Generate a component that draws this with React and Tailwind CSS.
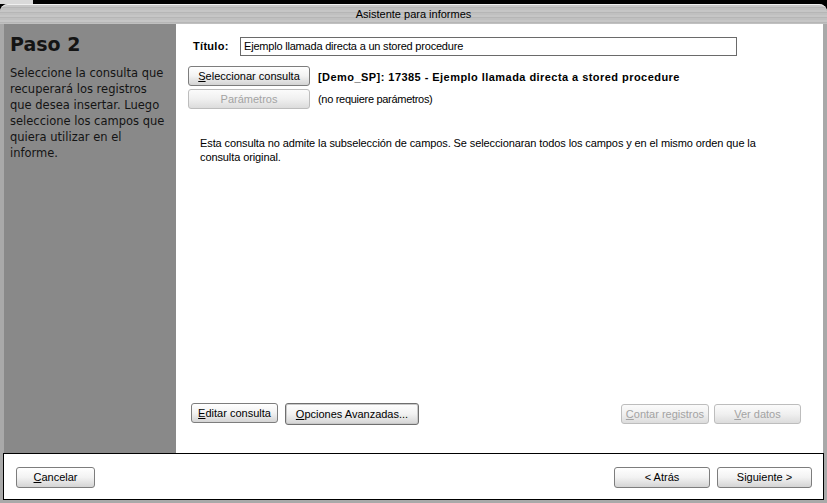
const ui = { fontFamily: '"Liberation Sans", Arial, sans-serif' };
const verdana = { fontFamily: '"DejaVu Sans", Verdana, sans-serif' };

function Btn({ children, w, disabled, focused, h = "h-[20px]" }) {
  const base = `flex ${h} items-center justify-center rounded-[3px] border text-[11px] leading-none`;
  const look = disabled
    ? "border-[#bdbdbd] bg-gradient-to-b from-[#fbfbfb] via-[#f0f0f0] to-[#dcdcdc] text-[#a3a3a3]"
    : focused
      ? "border-[#6f6f6f] bg-gradient-to-b from-white via-[#f2f2f2] to-[#d4d4d4] text-black shadow-[inset_0_0_0_1px_#c9c9c9]"
      : "border-[#7d7d7d] bg-gradient-to-b from-white via-[#f2f2f2] to-[#d4d4d4] text-black";
  return (
    <div className={`${base} ${look} ${w}`} style={ui}>
      {children}
    </div>
  );
}

export default function App() {
  return (
    <div className="relative h-[503px] w-[827px] overflow-hidden bg-black" style={ui}>
      {/* desktop strip above the window */}
      <div className="flex h-[4px]">
        <div className="h-full w-[33px] bg-[#d9d9d9]" />
      </div>

      {/* window */}
      <div className="flex h-[499px] flex-col rounded-t-[8px] bg-[#a9a9a9]">
        {/* title bar */}
        <div className="flex h-[20px] items-center justify-center rounded-t-[8px] border-t border-[#efefef] bg-[repeating-linear-gradient(180deg,#c6c6c6_0px,#c6c6c6_2px,#b6b6b6_2px,#b6b6b6_3px,#c0c0c0_3px,#c0c0c0_5px)]">
          <span className="text-[11px] text-black">Asistente para informes</span>
        </div>

        {/* main area */}
        <div className="flex h-[429px] pl-[4px] pr-[4px]">
          {/* left step panel */}
          <div className="w-[172px] bg-[#898989] pl-[6px] pt-[9px] text-[#141414]" style={verdana}>
            <h1 className="text-[19px] font-bold leading-[22px]">Paso 2</h1>
            <p className="mt-[10px] w-[156px] text-[11.5px] leading-[16px]">
              Seleccione la consulta que recuperará los registros que desea insertar. Luego seleccione los campos que quiera utilizar en el informe.
            </p>
          </div>

          {/* right content */}
          <div className="flex flex-1 flex-col bg-white pl-[12px] pt-[13px] pb-[28px]">
            <div className="flex items-center">
              <span className="ml-[5px] w-[47px] text-[11px] font-bold tracking-[0.3px]">Título:</span>
              <div className="flex h-[19px] w-[497px] items-center border border-[#6a6a6a] px-[3px] text-[11px] tracking-[-0.2px]">
                Ejemplo llamada directa a un stored procedure
              </div>
            </div>

            <div className="mt-[10px] flex items-center gap-[8px]">
              <Btn w="w-[122px]">
                <span><u>S</u>eleccionar consulta</span>
              </Btn>
              <span className="pt-[2px] text-[11px] font-bold tracking-[0.45px]">
                [Demo_SP]: 17385 - Ejemplo llamada directa a stored procedure
              </span>
            </div>
            <div className="mt-[3px] flex items-center gap-[8px]">
              <Btn w="w-[122px]" disabled>
                <span>Parámetros</span>
              </Btn>
              <span className="text-[11px] tracking-[-0.3px]">(no requiere parámetros)</span>
            </div>

            <p className="mt-[27px] ml-[12px] w-[575px] text-[11px] leading-[14px] tracking-[-0.1px]">
              Esta consulta no admite la subselección de campos. Se seleccionaran todos los campos y en el mismo orden que la consulta original.
            </p>

            <div className="mt-auto flex items-center pr-[22px]">
              <div className="ml-[3px] flex gap-[7px]">
                <Btn w="w-[87px]">
                  <span><u>E</u>ditar consulta</span>
                </Btn>
                <Btn w="w-[134px]" h="h-[22px]" focused>
                  <span><u>O</u>pciones Avanzadas...</span>
                </Btn>
              </div>
              <div className="ml-auto flex gap-[5px]">
                <Btn w="w-[88px]" disabled>
                  <span><u>C</u>ontar registros</span>
                </Btn>
                <Btn w="w-[87px]" disabled>
                  <span><u>V</u>er datos</span>
                </Btn>
              </div>
            </div>
          </div>
        </div>

        {/* bottom button bar */}
        <div className="mx-[3px] flex h-[47px] items-center border border-black bg-white pl-[12px] pr-[11px] pt-[2px]">
          <Btn w="w-[79px]" h="h-[21px]">
            <span><u>C</u>ancelar</span>
          </Btn>
          <div className="ml-auto flex gap-[7px]">
            <Btn w="w-[96px]" h="h-[21px]">
              <span>&lt; Atrás</span>
            </Btn>
            <Btn w="w-[95px]" h="h-[21px]">
              <span>Siguiente &gt;</span>
            </Btn>
          </div>
        </div>
      </div>
    </div>
  );
}
